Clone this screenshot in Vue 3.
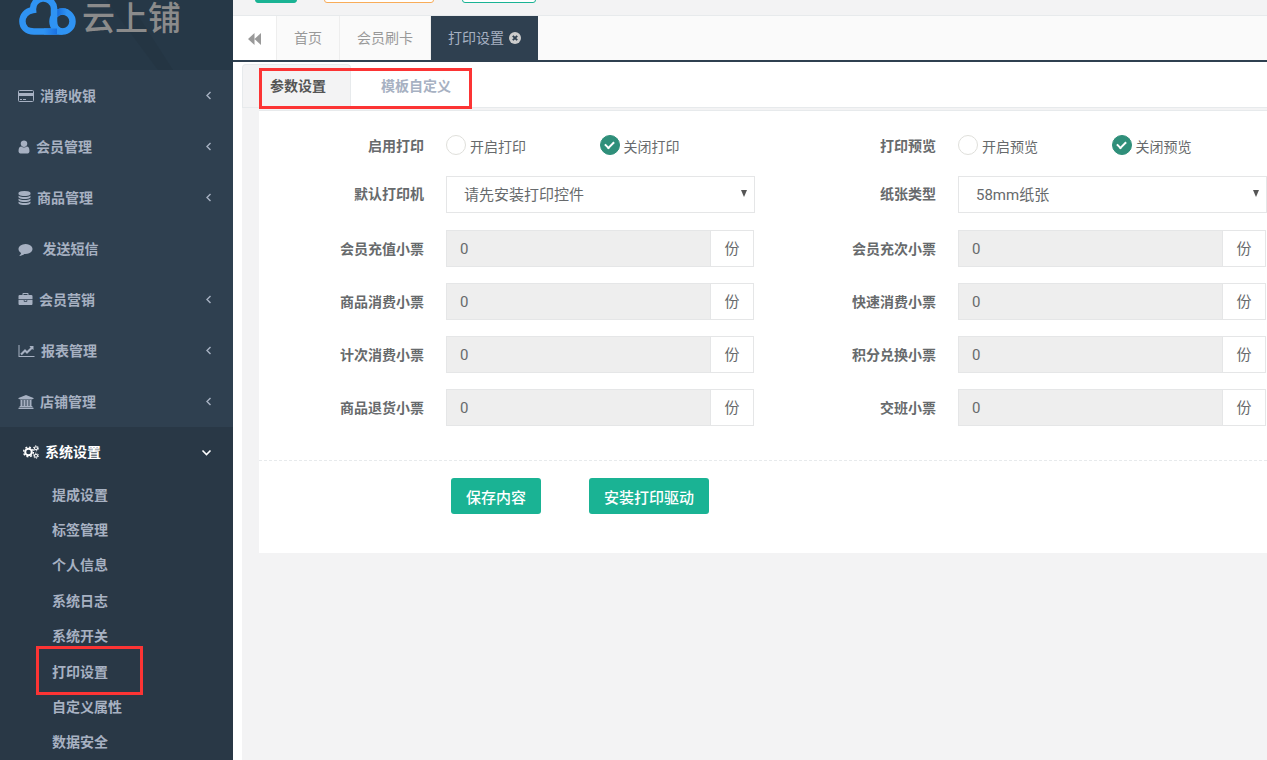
<script setup>
import { reactive, ref } from 'vue'

const menu = [
  { label: '消费收银', icon: 'card', width: 16, box: '0 0 16 14', arrow: true },
  { label: '会员管理', icon: 'path', width: 12, box: '200 80 1392 1640', arrow: true, d: 'M1536 1399q0 109-62.5 187t-150.5 78h-854q-88 0-150.5-78t-62.5-187q0-85 8.5-160.5t31.5-152 58.5-131 94-89 134.5-34.5q131 128 313 128t313-128q76 0 134.5 34.5t94 89 58.5 131 31.5 152 8.5 160.5zm-256-887q0 159-112.5 271.5t-271.5 112.5-271.5-112.5-112.5-271.5 112.5-271.5 271.5-112.5 271.5 112.5 112.5 271.5z' },
  { label: '商品管理', icon: 'path', width: 13, box: '128 0 1536 1792', arrow: true, d: 'M896 768q237 0 443-43t325-127v170q0 69-103 128t-280 93.5-385 34.5-385-34.5-280-93.5-103-128v-170q119 84 325 127t443 43zm0 768q237 0 443-43t325-127v170q0 69-103 128t-280 93.5-385 34.5-385-34.5-280-93.5-103-128v-170q119 84 325 127t443 43zm0-384q237 0 443-43t325-127v170q0 69-103 128t-280 93.5-385 34.5-385-34.5-280-93.5-103-128v-170q119 84 325 127t443 43zm0-1152q208 0 385 34.5t280 93.5 103 128v128q0 69-103 128t-280 93.5-385 34.5-385-34.5-280-93.5-103-128v-128q0-69 103-128t280-93.5 385-34.5z' },
  { label: '\u00a0发送短信', icon: 'path', width: 15, box: '0 0 1792 1792', arrow: false, d: 'M1792 896q0 174-120 321.5t-326 233-450 85.5q-70 0-145-8-198 175-460 242-49 14-114 22-17 2-30.5-9t-17.5-29v-1q-3-4-.5-12t2-10 4.5-9.5l6-9 7-8.5 8-9q7-8 31-34.5t34.5-38 31-39.5 32.5-51 27-59 26-76q-157-89-247.5-220t-90.5-281q0-130 71-248.5t191-204.5 286-136.5 348-50.5q244 0 450 85.5t326 233 120 321.5z' },
  { label: '会员营销', icon: 'path', width: 15, box: '0 0 1792 1792', arrow: true, d: 'M640 256h512v-128h-512v128zm1152 640v480q0 66-47 113t-113 47h-1472q-66 0-113-47t-47-113v-480h672v160q0 26 19 45t45 19h320q26 0 45-19t19-45v-160h672zm-768 0v128h-256v-128h256zm768-480v384h-1792v-384q0-66 47-113t113-47h352v-160q0-40 28-68t68-28h576q40 0 68 28t28 68v160h352q66 0 113 47t47 113z' },
  { label: '报表管理', icon: 'path', width: 17, box: '0 0 2048 1792', arrow: true, d: 'M2048 1536v128h-2048v-1536h128v1408h1920zm-128-1248v435q0 21-19.5 29.5t-35.5-7.5l-121-121-633 633q-10 10-23 10t-23-10l-233-233-416 416-192-192 585-585q10-10 23-10t23 10l233 233 464-464-121-121q-16-16-7.5-35.5t29.5-19.5h435q14 0 23 9t9 23z' },
  { label: '店铺管理', icon: 'path', width: 16, box: '0 0 1920 1792', arrow: true, d: 'M960 0l960 384v128h-128q0 26-20.5 45t-48.5 19h-1526q-28 0-48.5-19t-20.5-45h-128v-128zm-704 640h256v768h128v-768h256v768h128v-768h256v768h128v-768h256v768h59q28 0 48.5 19t20.5 45v64h-1664v-64q0-26 20.5-45t48.5-19h59v-768zm1595 960q28 0 48.5 19t20.5 45v128h-1920v-128q0-26 20.5-45t48.5-19h1782z' }
]

const submenu = ['提成设置', '标签管理', '个人信息', '系统日志', '系统开关', '打印设置', '自定义属性', '数据安全']

const toggles = [
  { name: 'print', label: '启用打印', on: '开启打印', off: '关闭打印' },
  { name: 'preview', label: '打印预览', on: '开启预览', off: '关闭预览' }
]
const state = reactive({ print: 'off', preview: 'off' })

const selects = [
  { id: 'printer', label: '默认打印机', option: '请先安装打印控件' },
  { id: 'paper', label: '纸张类型', option: '58mm纸张' }
]

const tickets = ref([
  { label: '会员充值小票', count: 0 },
  { label: '会员充次小票', count: 0 },
  { label: '商品消费小票', count: 0 },
  { label: '快速消费小票', count: 0 },
  { label: '计次消费小票', count: 0 },
  { label: '积分兑换小票', count: 0 },
  { label: '商品退货小票', count: 0 },
  { label: '交班小票', count: 0 }
])
</script>

<template>
  <div class="page">
    <aside class="sidebar">
      <div class="brand">
        <svg class="brand-bg" viewBox="0 0 233 71" preserveAspectRatio="none" aria-hidden="true">
          <path d="M106 0 L128 0 L173 71 L158 71 Z" fill="#243543" />
        </svg>
        <svg class="brand-mark" viewBox="0 0 58 36" aria-hidden="true">
          <defs>
            <linearGradient id="fold" x1="0" y1="0" x2="1" y2="0">
              <stop offset="0" stop-color="#2f93f3" />
              <stop offset="1" stop-color="#1a70e0" />
            </linearGradient>
            <linearGradient id="ring" x1="0" y1="0" x2="1" y2="0">
              <stop offset="0" stop-color="#1264d6" />
              <stop offset="1" stop-color="#2f93f3" />
            </linearGradient>
          </defs>
          <circle cx="43.500" cy="21.500" r="10" fill="none" stroke="#2f93f3" stroke-width="6.500" />
          <path d="M36 15A10 10 0 0 1 48 12.500" fill="none" stroke="url(#ring)" stroke-width="6.500" />
          <path d="M43.500 31.500H15C-0.500 31.500 0 12 14 10A10.500 10.500 0 0 1 35 8V21Q35 31.500 43.500 31.500" fill="none" stroke="#2f93f3" stroke-width="6.500" />
          <rect x="25" y="28.500" width="13" height="6" fill="url(#fold)" />
        </svg>
        <span class="brand-name">云上铺</span>
      </div>

      <nav class="nav">
        <a v-for="item in menu" :key="item.label" href="#" class="nav-item">
          <svg class="nav-icon" :width="item.width" height="14" :viewBox="item.box" aria-hidden="true">
            <path v-if="item.icon === 'path'" :d="item.d" fill="currentColor" />
            <g v-else>
              <rect x="0.5" y="1.5" width="15" height="11" rx="1" fill="none" stroke="currentColor" />
              <rect x="1" y="4" width="14" height="3" fill="currentColor" />
              <path d="M2 10.5H4M5 10.5H8" stroke="currentColor" />
            </g>
          </svg>
          <span>{{ item.label }}</span>
          <svg v-if="item.arrow" class="arrow" width="9" height="9" viewBox="0 0 9 9" aria-hidden="true">
            <path d="M6.500 1L3 4.500L6.500 8" fill="none" stroke="currentColor" stroke-width="1.400" />
          </svg>
        </a>
        <div class="nav-group">
          <a href="#" class="nav-item active">
            <svg class="nav-icon" width="16" height="14" viewBox="0 0 16 14" aria-hidden="true">
              <g fill="none" stroke="currentColor">
                <circle cx="5.500" cy="7" r="3.300" stroke-width="2" />
                <circle cx="5.500" cy="7" r="4.900" stroke-width="1.400" stroke-dasharray="1.925 1.925" />
                <circle cx="13" cy="3.300" r="1.500" stroke-width="1.100" />
                <circle cx="13" cy="3.300" r="2.500" stroke-width="1" stroke-dasharray="1.310 1.310" />
                <circle cx="13" cy="10.700" r="1.500" stroke-width="1.100" />
                <circle cx="13" cy="10.700" r="2.500" stroke-width="1" stroke-dasharray="1.310 1.310" />
              </g>
            </svg>
            <span>系统设置</span>
            <svg class="arrow open" width="11" height="9" viewBox="0 0 11 9" aria-hidden="true">
              <path d="M1.500 2.500L5.500 6.500L9.500 2.500" fill="none" stroke="currentColor" stroke-width="1.600" />
            </svg>
          </a>
          <ul class="submenu">
            <li v-for="name in submenu" :key="name" :class="{ marked: name === '打印设置' }">
              <a href="#">{{ name }}</a>
            </li>
          </ul>
        </div>
      </nav>
    </aside>

    <main class="main">
      <header class="topbar">
        <button type="button" class="chip solid" aria-label="菜单"></button>
        <button type="button" class="chip orange" aria-label="快捷操作"></button>
        <button type="button" class="chip teal" aria-label="刷新"></button>
      </header>

      <nav class="page-tabs">
        <button type="button" class="back" aria-label="后退">
          <svg width="13" height="12" viewBox="0 0 13 12" aria-hidden="true">
            <path d="M6.500 0V12L0 6ZM13 0V12L6.500 6Z" fill="#999" />
          </svg>
        </button>
        <a href="#">首页</a>
        <a href="#">会员刷卡</a>
        <a href="#" class="current">
          打印设置
          <svg width="12" height="12" viewBox="0 0 12 12" aria-hidden="true">
            <circle cx="6" cy="6" r="6" fill="#ccc" />
            <path d="M3.800 3.800L8.200 8.200M8.200 3.800L3.800 8.200" stroke="#2f4050" stroke-width="1.900" />
          </svg>
        </a>
      </nav>

      <section class="content">
        <div class="sub-tabs">
          <a href="#" class="selected">参数设置</a>
          <a href="#">模板自定义</a>
        </div>

        <form class="panel" @submit.prevent>
          <div class="fields">
            <div v-for="t in toggles" :key="t.name" class="field toggle" role="radiogroup" :aria-label="t.label">
              <span class="label">{{ t.label }}</span>
              <div class="choices">
                <label><input v-model="state[t.name]" type="radio" :name="t.name" value="on" /><span>{{ t.on }}</span></label>
                <label><input v-model="state[t.name]" type="radio" :name="t.name" value="off" /><span>{{ t.off }}</span></label>
              </div>
            </div>

            <div v-for="s in selects" :key="s.id" class="field pick">
              <label class="label" :for="s.id">{{ s.label }}</label>
              <div class="select-wrap">
                <select :id="s.id"><option>{{ s.option }}</option></select>
              </div>
            </div>

            <div v-for="(t, i) in tickets" :key="t.label" class="field">
              <label class="label" :for="'ticket' + i">{{ t.label }}</label>
              <div class="group">
                <input :id="'ticket' + i" v-model="t.count" type="text" readonly />
                <span class="unit">份</span>
              </div>
            </div>
          </div>

          <div class="actions">
            <button type="submit">保存内容</button>
            <button type="button">安装打印驱动</button>
          </div>
        </form>
      </section>
    </main>
  </div>
</template>

<style>
body {
  background: #f3f3f4;
}
</style>

<style scoped>
*,
*::after {
  box-sizing: border-box;
}

.page {
  display: flex;
  min-height: 100vh;
  overflow: hidden;
  background: #fff;
  color: #676a6c;
  font-family: Roboto, "Noto Sans CJK SC", sans-serif;
  font-size: 14px;
  line-height: 20px;
}

a {
  color: inherit;
  text-decoration: none;
}

button,
input,
select {
  font-family: inherit;
}

.sidebar {
  display: flex;
  flex: 0 0 233px;
  flex-direction: column;
  background: #2f4050;
  color: #a7b1c2;
  font-weight: 700;
}

.brand {
  display: flex;
  position: relative;
  gap: 5px;
  height: 70px;
  padding-left: 19px;
  background: #263847;
}

.brand-bg {
  position: absolute;
  inset: 0;
  width: 100%;
  height: 100%;
}

.brand-mark {
  position: relative;
  width: 58px;
  height: 36px;
}

.brand-name {
  position: relative;
  color: #8b8b8b;
  font-size: 33px;
  font-weight: 500;
  line-height: 37px;
}

.nav {
  display: flex;
  flex: 1;
  flex-direction: column;
}

.nav-item {
  display: flex;
  align-items: center;
  gap: 6px;
  height: 51px;
  padding: 0 20px 0 18px;
}

.nav-icon {
  flex: none;
}

.arrow {
  margin-left: auto;
}

.nav-group {
  display: flex;
  flex: 1;
  flex-direction: column;
  background: #293846;
}

.nav-item.active {
  height: 50px;
  padding-left: 23px;
  padding-right: 21px;
  color: #fff;
}

.submenu {
  display: flex;
  flex: 1;
  flex-direction: column;
  margin: 0;
  padding: 0;
  list-style: none;
}

.submenu li {
  display: flex;
  position: relative;
  flex: 1 0 35px;
  align-items: center;
  padding-left: 52px;
}

.submenu .marked::after {
  position: absolute;
  top: -8px;
  left: 36px;
  width: 107px;
  height: 49px;
  border: 3px solid #fc3434;
  content: "";
  pointer-events: none;
}

.main {
  display: flex;
  flex: 1;
  flex-direction: column;
  min-width: 0;
}

.topbar {
  display: flex;
  align-items: flex-end;
  height: 16px;
  padding: 0 22px 12px;
  border-bottom: 1px solid #e7eaec;
  background: #f3f3f4;
}

.chip {
  flex: none;
  height: 34px;
  padding: 0;
  border: 1px solid #1ab394;
  border-radius: 3px;
  background: #fff;
}

.chip.solid {
  width: 42px;
  background: #1ab394;
}

.chip.orange {
  width: 110px;
  margin-left: 27px;
  border-color: #f8ac59;
}

.chip.teal {
  width: 74px;
  margin-left: 28px;
}

.page-tabs {
  display: flex;
  height: 46px;
  border-bottom: 2px solid #2f4050;
  background: #fafafa;
  color: #999;
  line-height: 44px;
}

.back {
  display: flex;
  align-items: center;
  justify-content: center;
  width: 44px;
  padding: 2px 0 0;
  border: 0;
  border-right: 1px solid #eee;
  background: #fff;
}

.page-tabs a {
  padding: 0 17px;
  border-right: 1px solid #eee;
}

.page-tabs .current {
  display: flex;
  align-items: center;
  gap: 5px;
  border-right: 0;
  background: #2f4050;
  color: #a7b1c2;
}

.content {
  flex: 1;
  margin-left: 9px;
  background: #f3f3f4;
}

.sub-tabs {
  display: flex;
  position: relative;
  height: 46px;
  padding-top: 2px;
  border-bottom: 1px solid #e7eaec;
  background: #fff;
  color: #a7b1c2;
  font-weight: 700;
  line-height: 42px;
}

.sub-tabs::after {
  position: absolute;
  top: 6px;
  left: 17px;
  width: 213px;
  height: 41px;
  border: 3px solid #fc3434;
  content: "";
  pointer-events: none;
}

.sub-tabs a {
  padding: 0 28px 0 29px;
  border: 1px solid transparent;
  border-bottom: 0;
}

.sub-tabs .selected {
  padding: 0 24px 0 27px;
  border-color: #e7eaec;
  border-radius: 4px 4px 0 0;
  background: #f3f3f4;
  color: #555;
}

.panel {
  margin: 2px 0 0 17px;
  padding-bottom: 39px;
  border-top: 1px solid #e7eaec;
  background: #fff;
}

.fields {
  display: grid;
  grid-template-columns: 1fr 1fr;
  gap: 16px;
  padding: 21px 0 34px;
}

.field {
  display: flex;
  align-items: center;
  gap: 22px;
  min-width: 0;
  height: 37px;
}

.field.pick {
  height: 38px;
  padding-bottom: 2px;
}

.field.toggle {
  height: 28px;
}

.label {
  flex: 0 0 165px;
  font-weight: 700;
  text-align: right;
}

.choices {
  display: flex;
  flex: 1;
  padding-right: 2px;
}

.choices label {
  display: flex;
  flex: 1;
  gap: 4px;
}

.choices span {
  padding-top: 2px;
}

.choices input {
  width: 20px;
  height: 20px;
  margin: 0;
  border: 1px solid #dfdfdb;
  border-radius: 50%;
  appearance: none;
  background: #fff;
}

.choices input:checked {
  display: grid;
  place-items: center;
  border-color: #2f8f7a;
  background: #2f8f7a;
}

.choices input:checked::after {
  width: 9px;
  height: 6px;
  margin-bottom: 3px;
  border-bottom: 2px solid #fff;
  border-left: 2px solid #fff;
  content: "";
  transform: rotate(-45deg);
}

.select-wrap {
  position: relative;
  flex: 1;
}

.select-wrap::after {
  position: absolute;
  top: 14px;
  right: 8px;
  border: 3px solid transparent;
  border-top: 7px solid #555;
  border-bottom: 0;
  content: "";
  pointer-events: none;
}

select {
  display: block;
  width: 100%;
  height: 37px;
  padding: 2px 17px 0;
  border: 1px solid #e5e6e7;
  border-radius: 0;
  appearance: none;
  background: #fff;
  color: #676a6c;
  font-size: 15px;
}

.group {
  display: flex;
  flex: 1;
  height: 37px;
  min-width: 0;
  margin-right: 1px;
}

.group input {
  flex: 1;
  min-width: 0;
  padding: 0 13px;
  border: 1px solid #e5e6e7;
  border-radius: 0;
  background: #eee;
  color: #676a6c;
  font-size: 15px;
}

.unit {
  width: 43px;
  border: 1px solid #e5e6e7;
  border-left: 0;
  font-size: 15px;
  line-height: 36px;
  text-align: center;
}

.actions {
  display: flex;
  gap: 48px;
  padding: 17px 0 0 192px;
  border-top: 1px dashed #e7eaec;
}

.actions button {
  height: 36px;
  padding: 0 15px;
  border: 0;
  border-radius: 3px;
  background: #1ab394;
  color: #fff;
  font-size: 15px;
  font-weight: 500;
}
</style>
